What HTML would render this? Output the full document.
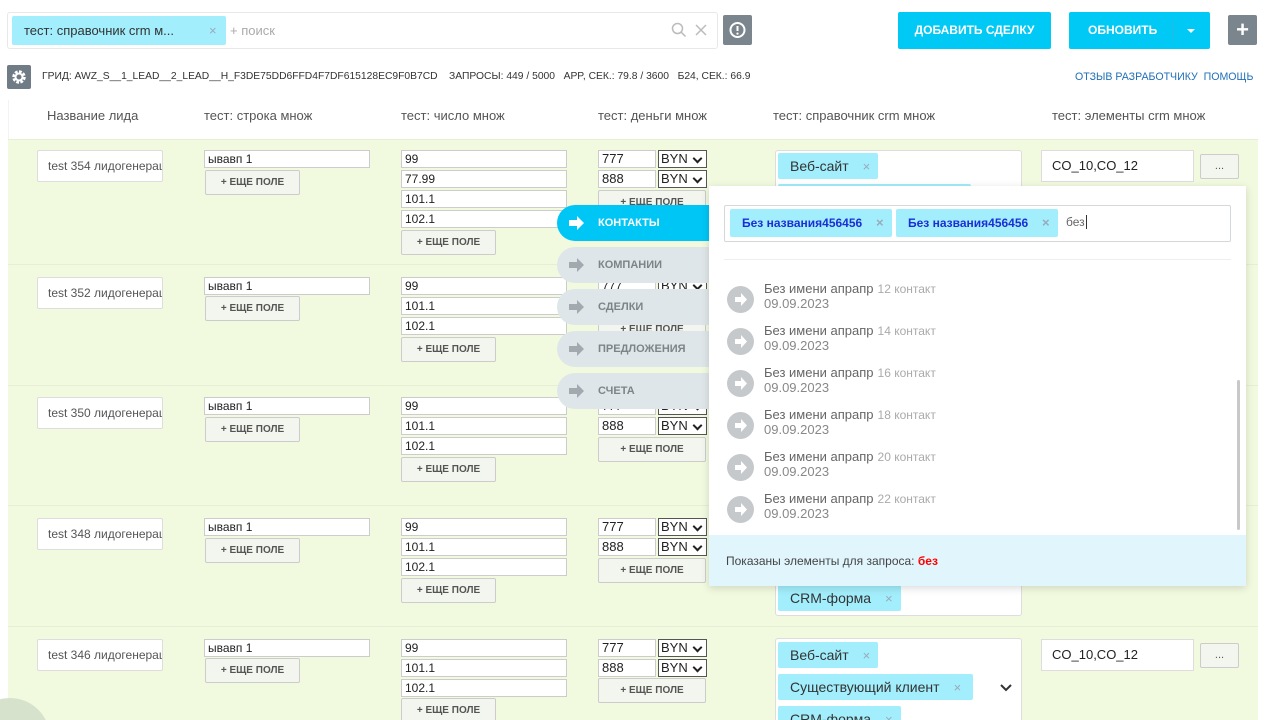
<!DOCTYPE html>
<html><head><meta charset="utf-8"><style>
*{box-sizing:border-box;margin:0;padding:0}
html,body{width:1280px;height:720px;overflow:hidden}
body{background:#fff;font-family:"Liberation Sans",Arial,sans-serif;position:relative;color:#333}
.a{position:absolute}
.row{position:absolute;left:8px;width:1250px;background:#f1fadf;border-top:1px solid #e6efd6}
.inp{position:absolute;background:#fff;border:1px solid #ccc;font-size:12px;padding-left:3px;line-height:16px;height:18px;color:#222}
.nm{position:absolute;background:#fff;border:1px solid #ddd;border-radius:2px;width:126px;height:32px;font-size:12px;color:#555;padding-left:10px;line-height:30px;white-space:nowrap;overflow:hidden}
.btn{position:absolute;width:95px;height:25px;background:#f3f6ee;border:1px solid #ccc;border-radius:2px;font-size:10px;font-weight:bold;color:#555;text-align:center;line-height:23px}
.sel{position:absolute;width:49px;height:18px;background:#fff;border:1px solid #555;font-size:13px;line-height:16px;padding-left:2px;color:#222}
.sel:after{content:"";position:absolute;right:5px;top:4px;width:5px;height:5px;border-right:2px solid #222;border-bottom:2px solid #222;transform:rotate(45deg)}
.tag{position:absolute;background:#a2eefc;border-radius:2px;height:26px;font-size:14px;color:#333;padding-left:12px;line-height:26px}
.tag i{font-style:normal;color:#9ab;margin-left:14px;font-size:13px}
.box{position:absolute;background:#fff;border:1px solid #ddd;border-radius:3px}
.nav{position:absolute;left:557px;width:152px;height:36px;border-radius:18px 0 0 18px;background:#dfe6e9;font-size:11px;font-weight:bold;color:#7d8489;line-height:36px;padding-left:41px}
.nav svg{position:absolute;left:12px;top:11px}
.hd{position:absolute;top:108px;font-size:13px;color:#555}
.it{position:absolute;left:727px}
.it .c{position:absolute;left:0;top:-2px;width:27px;height:27px;border-radius:50%;background:#c6c9cc}
.it .t{position:absolute;left:37px;top:-7px;font-size:13px;color:#666;white-space:nowrap}
.it .t small{font-size:12px;color:#aaa;margin-left:4px}
.it .d{position:absolute;left:37px;top:8px;font-size:13px;color:#888}
</style></head><body>
<div class="box" style="left:7px;top:12px;width:711px;height:37px;border-color:#e8e8e8"></div>
<div class="tag" style="left:12px;top:16px;width:214px;height:29px;line-height:29px;font-size:13px">тест: справочник crm м...<i style="position:absolute;left:197px;margin:0">×</i></div>
<div class="a" style="left:230px;top:23px;font-size:13px;color:#aaa">+ поиск</div>
<svg class="a" style="left:671px;top:22px" width="16" height="16"><circle cx="6.5" cy="6.5" r="5" fill="none" stroke="#bbb" stroke-width="1.5"/><path d="M10 10l4.5 4.5" stroke="#bbb" stroke-width="1.5"/></svg>
<svg class="a" style="left:695px;top:24px" width="12" height="12"><path d="M1 1l10 10M11 1L1 11" stroke="#bbb" stroke-width="1.5"/></svg>
<div class="a" style="left:723px;top:15px;width:29px;height:30px;background:#7b858e;border-radius:2px"><svg width="29" height="30"><circle cx="14.5" cy="15" r="7" fill="none" stroke="#fff" stroke-width="2"/><path d="M14.5 11v5" stroke="#fff" stroke-width="2"/><circle cx="14.5" cy="18.6" r="1.1" fill="#fff"/></svg></div>
<div class="a" style="left:898px;top:12px;width:153px;height:37px;background:#00c9f5;border-radius:2px;color:#fff;font-size:12px;font-weight:bold;text-align:center;line-height:37px">ДОБАВИТЬ СДЕЛКУ</div>
<div class="a" style="left:1069px;top:12px;width:141px;height:37px;background:#00c9f5;border-radius:2px;color:#fff;font-size:12px;font-weight:bold;line-height:37px;padding-left:19px">ОБНОВИТЬ<span style="position:absolute;left:104px;top:8px;width:1px;height:21px;background:#2bb8e0"></span><span style="position:absolute;left:118px;top:17px;border:4px solid transparent;border-top:4px solid #fff;border-bottom:0"></span></div>
<div class="a" style="left:1228px;top:15px;width:29px;height:30px;background:#7b858e;border-radius:2px;color:#fff;font-size:22px;font-weight:bold;text-align:center;line-height:30px">+</div>
<div class="a" style="left:7px;top:65px;width:24px;height:24px;background:#6f7b85;border-radius:2px"><svg width="24" height="24"><circle cx="12" cy="12" r="5" fill="none" stroke="#fff" stroke-width="3.5" stroke-dasharray="2.6 1.3"/><circle cx="12" cy="12" r="3.5" fill="none" stroke="#fff" stroke-width="2"/></svg></div>
<div class="a" style="left:42px;top:71px;font-size:10.3px;color:#333;white-space:nowrap">ГРИД: AWZ_S__1_LEAD__2_LEAD__H_F3DE75DD6FFD4F7DF615128EC9F0B7CD &nbsp;&nbsp; ЗАПРОСЫ: 449 / 5000 &nbsp; APP, СЕК.: 79.8 / 3600 &nbsp; Б24, СЕК.: 66.9</div>
<div class="a" style="left:1075px;top:71px;font-size:10.6px;color:#2170b8;white-space:nowrap">ОТЗЫВ РАЗРАБОТЧИКУ &nbsp;ПОМОЩЬ</div>
<div class="hd" style="left:47px">Название лида</div>
<div class="hd" style="left:204px">тест: строка множ</div>
<div class="hd" style="left:401px">тест: число множ</div>
<div class="hd" style="left:598px">тест: деньги множ</div>
<div class="hd" style="left:773px">тест: справочник crm множ</div>
<div class="hd" style="left:1052px">тест: элементы crm множ</div>
<div class="a" style="left:8px;top:100px;width:1250px;height:40px;border-left:1px solid #f3f3f3"></div>

<div class="row" style="top:139px;height:126px"></div>
<div class="row" style="top:264px;height:122px"></div>
<div class="row" style="top:385px;height:121px"></div>
<div class="row" style="top:505px;height:122px"></div>
<div class="row" style="top:626px;height:94px"></div>
<div class="a" style="left:-30px;top:698px;width:80px;height:80px;border-radius:50%;background:#d7e2cc"></div>

<div class="nm" style="left:37px;top:150px">test 354 лидогенерация</div>
<div class="inp" style="left:204px;top:150px;width:166px">ывавп 1</div>
<div class="btn" style="left:205px;top:170px">+ ЕЩЕ ПОЛЕ</div>
<div class="inp" style="left:401px;top:150px;width:166px">99</div>
<div class="inp" style="left:401px;top:170px;width:166px">77.99</div>
<div class="inp" style="left:401px;top:190px;width:166px">101.1</div>
<div class="inp" style="left:401px;top:210px;width:166px">102.1</div>
<div class="btn" style="left:401px;top:230px">+ ЕЩЕ ПОЛЕ</div>
<div class="inp" style="left:598px;top:150px;width:58px;font-size:13px">777</div><div class="sel" style="left:658px;top:150px">BYN</div>
<div class="inp" style="left:598px;top:170px;width:58px;font-size:13px">888</div><div class="sel" style="left:658px;top:170px">BYN</div>
<div class="btn" style="left:598px;top:190px;width:108px">+ ЕЩЕ ПОЛЕ</div>
<div class="box" style="left:775px;top:150px;width:247px;height:40px"></div>
<div class="tag" style="left:778px;top:153px;width:100px">Веб-сайт<i>×</i></div>
<div class="tag" style="left:778px;top:184px;width:193px;height:6px"></div>
<div class="inp" style="left:1041px;top:150px;width:153px;height:32px;font-size:13px;padding-left:10px;line-height:30px;border-color:#ddd">CO_10,CO_12</div>
<div class="btn" style="left:1200px;top:154px;width:39px;font-size:11px;font-weight:normal">...</div>

<div class="nm" style="left:37px;top:277px">test 352 лидогенерация</div>
<div class="inp" style="left:204px;top:277px;width:166px">ывавп 1</div>
<div class="btn" style="left:205px;top:296px">+ ЕЩЕ ПОЛЕ</div>
<div class="inp" style="left:401px;top:277px;width:166px">99</div>
<div class="inp" style="left:401px;top:297px;width:166px">101.1</div>
<div class="inp" style="left:401px;top:317px;width:166px">102.1</div>
<div class="btn" style="left:401px;top:337px">+ ЕЩЕ ПОЛЕ</div>
<div class="inp" style="left:598px;top:277px;width:58px">777</div><div class="sel" style="left:658px;top:277px">BYN</div>
<div class="btn" style="left:598px;top:317px;width:108px">+ ЕЩЕ ПОЛЕ</div>

<div class="nm" style="left:37px;top:397px">test 350 лидогенерация</div>
<div class="inp" style="left:204px;top:397px;width:166px">ывавп 1</div>
<div class="btn" style="left:205px;top:417px">+ ЕЩЕ ПОЛЕ</div>
<div class="inp" style="left:401px;top:397px;width:166px">99</div>
<div class="inp" style="left:401px;top:417px;width:166px">101.1</div>
<div class="inp" style="left:401px;top:437px;width:166px">102.1</div>
<div class="btn" style="left:401px;top:457px">+ ЕЩЕ ПОЛЕ</div>
<div class="inp" style="left:598px;top:397px;width:58px">777</div><div class="sel" style="left:658px;top:397px">BYN</div>
<div class="inp" style="left:598px;top:417px;width:58px;font-size:13px">888</div><div class="sel" style="left:658px;top:417px">BYN</div>
<div class="btn" style="left:598px;top:437px;width:108px">+ ЕЩЕ ПОЛЕ</div>

<div class="nm" style="left:37px;top:518px">test 348 лидогенерация</div>
<div class="inp" style="left:204px;top:518px;width:166px">ывавп 1</div>
<div class="btn" style="left:205px;top:538px">+ ЕЩЕ ПОЛЕ</div>
<div class="inp" style="left:401px;top:518px;width:166px">99</div>
<div class="inp" style="left:401px;top:538px;width:166px">101.1</div>
<div class="inp" style="left:401px;top:558px;width:166px">102.1</div>
<div class="btn" style="left:401px;top:578px">+ ЕЩЕ ПОЛЕ</div>
<div class="inp" style="left:598px;top:518px;width:58px;font-size:13px">777</div><div class="sel" style="left:658px;top:518px">BYN</div>
<div class="inp" style="left:598px;top:538px;width:58px;font-size:13px">888</div><div class="sel" style="left:658px;top:538px">BYN</div>
<div class="btn" style="left:598px;top:558px;width:108px">+ ЕЩЕ ПОЛЕ</div>
<div class="box" style="left:775px;top:560px;width:247px;height:56px"></div>
<div class="tag" style="left:778px;top:585px;width:123px">CRM-форма<i>×</i></div>

<div class="nm" style="left:37px;top:639px">test 346 лидогенерация</div>
<div class="inp" style="left:204px;top:639px;width:166px">ывавп 1</div>
<div class="btn" style="left:205px;top:658px">+ ЕЩЕ ПОЛЕ</div>
<div class="inp" style="left:401px;top:639px;width:166px">99</div>
<div class="inp" style="left:401px;top:659px;width:166px">101.1</div>
<div class="inp" style="left:401px;top:679px;width:166px">102.1</div>
<div class="btn" style="left:401px;top:698px">+ ЕЩЕ ПОЛЕ</div>
<div class="inp" style="left:598px;top:639px;width:58px;font-size:13px">777</div><div class="sel" style="left:658px;top:639px">BYN</div>
<div class="inp" style="left:598px;top:659px;width:58px;font-size:13px">888</div><div class="sel" style="left:658px;top:659px">BYN</div>
<div class="btn" style="left:598px;top:678px;width:108px">+ ЕЩЕ ПОЛЕ</div>
<div class="box" style="left:775px;top:638px;width:247px;height:90px"></div>
<div class="tag" style="left:778px;top:642px;width:100px">Веб-сайт<i>×</i></div>
<div class="tag" style="left:778px;top:674px;width:195px">Существующий клиент<i>×</i></div>
<div class="tag" style="left:778px;top:706px;width:123px">CRM-форма<i>×</i></div>
<svg class="a" style="left:1000px;top:684px" width="12" height="8"><path d="M1 1l5 5 5-5" fill="none" stroke="#333" stroke-width="2"/></svg>
<div class="inp" style="left:1041px;top:639px;width:153px;height:32px;font-size:13px;padding-left:10px;line-height:30px;border-color:#ddd">CO_10,CO_12</div>
<div class="btn" style="left:1200px;top:643px;width:39px;font-size:11px;font-weight:normal">...</div>

<div class="nav" style="top:205px;background:#00c6f6;color:#fff">КОНТАКТЫ<svg width="16" height="14"><path d="M0 4h8V0l7 7-7 7V10H0z" fill="#fff"/></svg></div>
<div class="nav" style="top:247px">КОМПАНИИ<svg width="16" height="14"><path d="M0 4h8V0l7 7-7 7V10H0z" fill="#a3aaaf"/></svg></div>
<div class="nav" style="top:289px">СДЕЛКИ<svg width="16" height="14"><path d="M0 4h8V0l7 7-7 7V10H0z" fill="#a3aaaf"/></svg></div>
<div class="nav" style="top:331px">ПРЕДЛОЖЕНИЯ<svg width="16" height="14"><path d="M0 4h8V0l7 7-7 7V10H0z" fill="#a3aaaf"/></svg></div>
<div class="nav" style="top:373px">СЧЕТА<svg width="16" height="14"><path d="M0 4h8V0l7 7-7 7V10H0z" fill="#a3aaaf"/></svg></div>

<div class="a" style="left:709px;top:186px;width:537px;height:400px;background:#fff;box-shadow:0 2px 8px rgba(0,0,0,.15)"></div>
<div class="a" style="left:724px;top:205px;width:507px;height:37px;border:1px solid #d5d8da;border-radius:2px"></div>
<div class="tag" style="left:730px;top:209px;width:162px;height:28px;line-height:28px;font-size:12px;font-weight:bold;color:#1b2fd6">Без названия456456<i style="position:absolute;left:146px;margin:0">×</i></div>
<div class="tag" style="left:896px;top:209px;width:162px;height:28px;line-height:28px;font-size:12px;font-weight:bold;color:#1b2fd6">Без названия456456<i style="position:absolute;left:146px;margin:0">×</i></div>
<div class="a" style="left:1066px;top:215px;font-size:12px;color:#666">без<span style="border-left:1px solid #333;margin-left:1px"></span></div>
<div class="a" style="left:724px;top:259px;width:507px;height:1px;background:#eee"></div>
<div class="it" style="top:288px"><div class="c"></div><div class="t">Без имени апрапр<small>12 контакт</small></div><div class="d">09.09.2023</div></div>
<div class="it" style="top:330px"><div class="c"></div><div class="t">Без имени апрапр<small>14 контакт</small></div><div class="d">09.09.2023</div></div>
<div class="it" style="top:372px"><div class="c"></div><div class="t">Без имени апрапр<small>16 контакт</small></div><div class="d">09.09.2023</div></div>
<div class="it" style="top:414px"><div class="c"></div><div class="t">Без имени апрапр<small>18 контакт</small></div><div class="d">09.09.2023</div></div>
<div class="it" style="top:456px"><div class="c"></div><div class="t">Без имени апрапр<small>20 контакт</small></div><div class="d">09.09.2023</div></div>
<div class="it" style="top:498px"><div class="c"></div><div class="t">Без имени апрапр<small>22 контакт</small></div><div class="d">09.09.2023</div></div>
<svg class="a" style="left:727px;top:286px" width="27" height="240"><g fill="#fff"><path id="ar" d="M8 11h6V7l6 6.5-6 6.5v-4H8z"/><use href="#ar" y="42"/><use href="#ar" y="84"/><use href="#ar" y="126"/><use href="#ar" y="168"/><use href="#ar" y="210"/></g></svg>
<div class="a" style="left:1237px;top:380px;width:3px;height:150px;background:#c8c8c8;border-radius:2px"></div>
<div class="a" style="left:709px;top:535px;width:537px;height:51px;background:#e1f6fc"></div>
<div class="a" style="left:726px;top:554px;font-size:12px;color:#444">Показаны элементы для запроса: <b style="color:#f00">без</b></div>
</body></html>
